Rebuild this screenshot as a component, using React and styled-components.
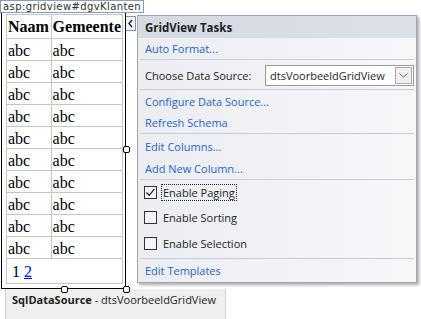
import React from "react";
import styled, { createGlobalStyle } from "styled-components";

const GlobalStyle = createGlobalStyle`
  html, body {
    margin: 0;
    padding: 0;
    background: #ffffff;
  }
`;

const rows = Array.from({ length: 10 }, () => ["abc", "abc"]);

const tasks = [
  { kind: "link", items: ["Auto Format..."], height: 21 },
  { kind: "source" },
  { kind: "link", items: ["Configure Data Source...", "Refresh Schema"], height: 21, pad: "1px 0 0" },
  { kind: "link", items: ["Edit Columns...", "Add New Column..."], height: 22, pad: "1px 0 0" },
  { kind: "check" },
  { kind: "link", items: ["Edit Templates"], height: 23 }
];

const checks = [
  { label: "Enable Paging", checked: true, focused: true },
  { label: "Enable Sorting" },
  { label: "Enable Selection" }
];

function App() {
  return (
    <Page>
      <GlobalStyle />
      <Surface>
        <TagLabel>asp:gridview#dgvKlanten</TagLabel>
        <GridFrame>
          <Grid>
            <thead>
              <tr>
                <HeadCell $w={42}>Naam</HeadCell>
                <HeadCell>Gemeente</HeadCell>
              </tr>
            </thead>
            <tbody>
              {rows.map((r, i) => (
                <tr key={i}>
                  <Cell>{r[0]}</Cell>
                  <Cell>{r[1]}</Cell>
                </tr>
              ))}
              <tr>
                <PagerCell colSpan={2}>
                  1 <PageLink>2</PageLink>
                </PagerCell>
              </tr>
            </tbody>
          </Grid>
          <Handle $pos="right" />
          <Handle $pos="bottom" />
          <Handle $pos="corner" />
        </GridFrame>
        <SmartArrow>
          <svg width="7" height="9" viewBox="0 0 7 9">
            <path d="M5 1 L2 4.5 L5 8" fill="none" stroke="#1a1a1a" strokeWidth="1.3" />
          </svg>
        </SmartArrow>
        <TaskPanel>
          <PanelHeader>GridView Tasks</PanelHeader>
          {tasks.map((t, i) => {
            if (t.kind === "source") {
              return (
                <Section key={i} $pad="4px 0 3px">
                  <SourceRow>
                    <Label>Choose Data Source:</Label>
                    <Select>
                      <SelectText>dtsVoorbeeldGridView</SelectText>
                      <SelectButton>
                        <svg width="9" height="5" viewBox="0 0 9 5">
                          <path d="M0.5 0.5 L4.5 4.2 L8.5 0.5" fill="none" stroke="#606060" strokeWidth="1" />
                        </svg>
                      </SelectButton>
                    </Select>
                  </SourceRow>
                </Section>
              );
            }
            if (t.kind === "check") {
              return (
                <Section key={i} $pad="0 0 2px">
                  {checks.map((c, j) => (
                    <CheckRow key={c.label} $h={j === 0 ? 24 : 26}>
                      <Box>
                        {c.checked && (
                          <svg width="11" height="11" viewBox="0 0 11 11">
                            <path d="M1.5 5.5 L4.2 8.3 L9.5 1.8" fill="none" stroke="#222" strokeWidth="1.3" />
                          </svg>
                        )}
                      </Box>
                      <CheckLabel $focused={c.focused}>{c.label}</CheckLabel>
                    </CheckRow>
                  ))}
                </Section>
              );
            }
            return (
              <Section key={i} $pad={t.pad} $last={i === tasks.length - 1}>
                {t.items.map((it) => (
                  <TaskLink key={it} $h={t.height}>{it}</TaskLink>
                ))}
              </Section>
            );
          })}
        </TaskPanel>
      </Surface>
      <DataSourceBar>
        <b>SqlDataSource</b>&nbsp;- dtsVoorbeeldGridView
      </DataSourceBar>
    </Page>
  );
}

const Page = styled.div`
  width: 421px;
  height: 319px;
  overflow: hidden;
  font-family: "Open Sans", "Noto Sans", sans-serif;
`;

const Surface = styled.div`
  position: relative;
  display: flex;
  align-items: flex-start;
  padding-top: 12px;
`;

const TagLabel = styled.div`
  position: absolute;
  top: 0;
  left: 0;
  z-index: 2;
  height: 11px;
  padding: 0 2px 0 2px;
  border: 1px solid #8a9cbc;
  background: #ffffff;
  font-family: "DejaVu Sans", sans-serif;
  font-size: 10px;
  letter-spacing: 0.4px;
  line-height: 11px;
  color: #303030;
  white-space: nowrap;
`;

const GridFrame = styled.div`
  position: relative;
  box-sizing: border-box;
  width: 125px;
  height: 277px;
  margin-left: 1px;
  border: 1px solid #000000;
  padding: 1px 0 0 4px;
`;

const Grid = styled.table`
  border-collapse: collapse;
  border: 1px solid #c4c4c4;
  width: 117px;
  font-family: "Liberation Serif", serif;
  font-size: 16px;
  color: #000000;
`;

const HeadCell = styled.th`
  height: 23px;
  padding: 0 1px;
  border: 1px solid #c4c4c4;
  text-align: left;
  font-weight: bold;
  width: ${(p) => (p.$w ? `${p.$w}px` : "auto")};
`;

const Cell = styled.td`
  height: 19px;
  padding: 2px 1px 0;
  border: 1px solid #c4c4c4;
  line-height: 18px;
`;

const PagerCell = styled.td`
  height: 23px;
  padding: 1px 5px 0;
  border: 1px solid #c4c4c4;
`;

const PageLink = styled.span`
  color: #0000ee;
  text-decoration: underline;
`;

const Handle = styled.span`
  position: absolute;
  width: 7px;
  height: 7px;
  box-sizing: border-box;
  border: 1px solid #000000;
  border-radius: 2px;
  background: #ffffff;
  ${(p) =>
    p.$pos === "right"
      ? "right: -5px; top: 133px;"
      : p.$pos === "bottom"
      ? "left: 59px; bottom: -5px;"
      : "right: -5px; bottom: -5px;"}
`;

const SmartArrow = styled.div`
  box-sizing: border-box;
  width: 11px;
  height: 15px;
  margin-top: 4px;
  margin-left: -1px;
  border: 1px solid #7f93b5;
  background: #f2f4f8;
  display: flex;
  align-items: center;
  justify-content: center;
`;

const TaskPanel = styled.div`
  box-sizing: border-box;
  width: 280px;
  margin-top: 3px;
  margin-left: 1px;
  border: 1px solid #a2a6ad;
  background: linear-gradient(90deg, #ebedf2 0%, #f3f4f7 70%, #f6f7f9 100%);
  box-shadow: 2px 2px 3px rgba(0, 0, 0, 0.35);
`;

const PanelHeader = styled.div`
  height: 22px;
  padding-left: 7px;
  display: flex;
  align-items: center;
  background: linear-gradient(90deg, #d4d9e2 0%, #dce0e8 100%);
  font-weight: bold;
  font-size: 11.5px;
  color: #1e1e1e;
`;

const Section = styled.div`
  margin: 0 2px;
  padding: ${(p) => p.$pad || "0"};
  border-bottom: ${(p) => (p.$last ? "none" : "1px solid #c9ccd3")};
`;

const TaskLink = styled.div`
  height: ${(p) => p.$h}px;
  padding-left: 5px;
  display: flex;
  align-items: center;
  font-size: 11px;
  color: #1f66c2;
`;

const SourceRow = styled.div`
  display: flex;
  align-items: center;
  padding-left: 5px;
  height: 22px;
`;

const Label = styled.span`
  font-size: 11px;
  color: #1e1e1e;
  width: 120px;
`;

const Select = styled.div`
  box-sizing: border-box;
  display: flex;
  align-items: center;
  width: 149px;
  height: 21px;
  border: 1px solid #9a9a9a;
  background: #ffffff;
  padding: 0 1px 0 4px;
`;

const SelectText = styled.span`
  flex: 1;
  font-size: 11px;
  color: #1e1e1e;
`;

const SelectButton = styled.span`
  box-sizing: border-box;
  width: 17px;
  height: 17px;
  border: 1px solid #a8a8a8;
  background: #f0f0f0;
  display: flex;
  align-items: center;
  justify-content: center;
`;

const CheckRow = styled.div`
  height: ${(p) => p.$h}px;
  display: flex;
  align-items: center;
  padding-left: 4px;
`;

const Box = styled.span`
  box-sizing: border-box;
  width: 13px;
  height: 13px;
  border: 1px solid #333333;
  background: #f4f5f8;
  display: flex;
  align-items: center;
  justify-content: center;
  margin-right: 4px;
`;

const CheckLabel = styled.span`
  font-size: 11px;
  color: #1e1e1e;
  padding: 0 1px;
  border: 1px dotted ${(p) => (p.$focused ? "#222222" : "transparent")};
`;

const DataSourceBar = styled.div`
  box-sizing: border-box;
  width: 221px;
  height: 31px;
  margin-left: 5px;
  padding: 3px 0 0 6px;
  background: #efefef;
  border-left: 1px solid #d0d0d0;
  border-right: 1px solid #d0d0d0;
  font-size: 11px;
  color: #1e1e1e;
  white-space: nowrap;
`;

export default App;
